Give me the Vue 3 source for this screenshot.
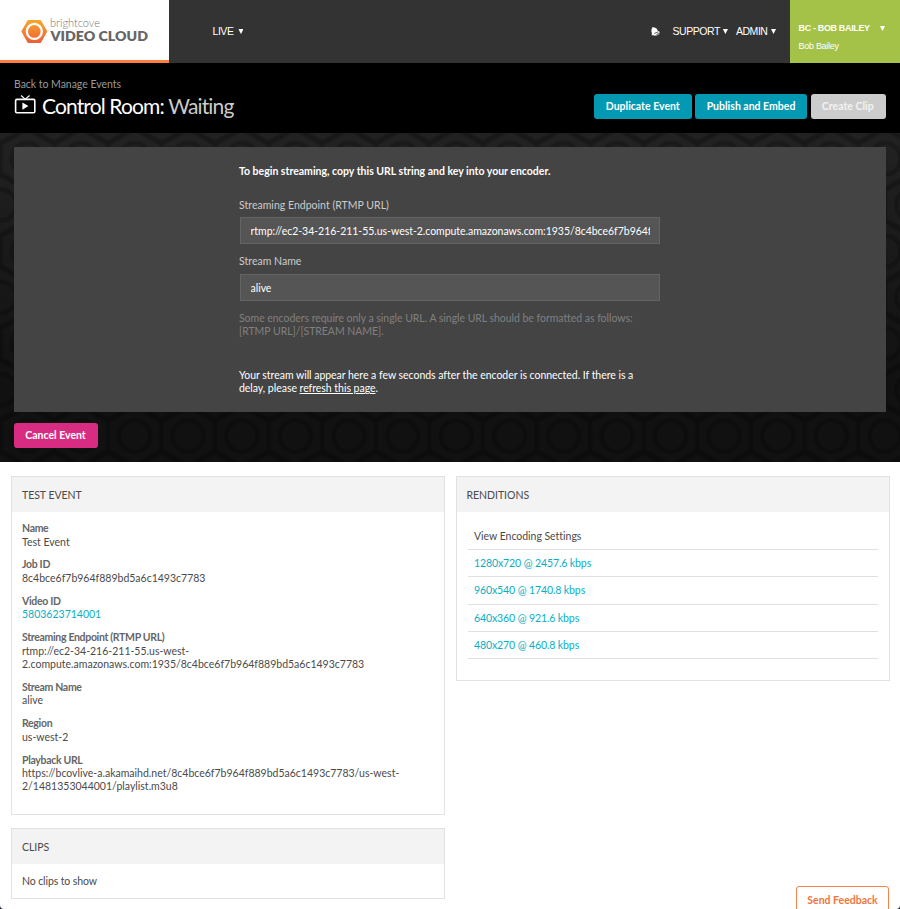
<script setup>
const actions = [
  { label: 'Duplicate Event', kind: 'primary dup' },
  { label: 'Publish and Embed', kind: 'primary pub' },
  { label: 'Create Clip', kind: 'disabled' },
]
const details = [
  { label: 'Name', lines: ['Test Event'] },
  { label: 'Job ID', lines: ['8c4bce6f7b964f889bd5a6c1493c7783'] },
  { label: 'Video ID', lines: ['5803623714001'], link: true },
  {
    label: 'Streaming Endpoint (RTMP URL)',
    lines: ['rtmp://ec2-34-216-211-55.us-west-', '2.compute.amazonaws.com:1935/8c4bce6f7b964f889bd5a6c1493c7783'],
  },
  { label: 'Stream Name', lines: ['alive'] },
  { label: 'Region', lines: ['us-west-2'] },
  {
    label: 'Playback URL',
    lines: ['https://bcovlive-a.akamaihd.net/8c4bce6f7b964f889bd5a6c1493c7783/us-west-', '2/1481353044001/playlist.m3u8'],
  },
]
const renditions = ['1280x720 @ 2457.6 kbps', '960x540 @ 1740.8 kbps', '640x360 @ 921.6 kbps', '480x270 @ 460.8 kbps']
</script>

<template>
  <div class="page">
    <header class="topbar">
      <div class="brand">
        <svg class="logo" width="128" height="28" viewBox="0 0 128 28">
          <defs>
            <linearGradient id="hex" x1="0" y1="0" x2="0" y2="1">
              <stop offset="0" stop-color="#f9a52b" />
              <stop offset="1" stop-color="#ee6039" />
            </linearGradient>
          </defs>
          <path d="M8.2 2.8H20.4L26.4 13.4L20.4 24.2H8.2L2.2 13.4Z" fill="url(#hex)" stroke="url(#hex)" stroke-width="1.6" stroke-linejoin="round" />
          <circle cx="14.3" cy="13.4" r="7.5" fill="none" stroke="#fff" stroke-width="2.3" />
          <text class="logo-small" x="30" y="9" textLength="50">brightcove</text>
          <text class="logo-big" x="30.5" y="22.8" textLength="97.5" lengthAdjust="spacingAndGlyphs">VIDEO CLOUD</text>
        </svg>
      </div>
      <nav class="nav">
        <span class="item live">LIVE <i class="caret"></i></span>
        <span class="spacer"></span>
        <svg class="bell" width="9" height="9" viewBox="0 0 9 9">
          <path d="M1 .4Q3.8-.4 5.8 1.7L6.6 3.5L8.4 5L4.6 8.3H.8V5.5L.3 4.3Z" fill="#fff" />
          <path d="M2.4 6.9L8.2 4.8Q8.7 7.4 6 8.1L3 8.3" fill="none" stroke="#ddd" stroke-width=".8" />
          <path d="M3.3 6.4L7 4.9" stroke="#333" stroke-width=".7" />
        </svg>
        <span class="item support">SUPPORT <i class="caret"></i></span>
        <span class="item">ADMIN <i class="caret"></i></span>
      </nav>
      <div class="account">
        <div class="account-name"><b>BC - BOB BAILEY</b><i class="caret"></i></div>
        <div class="user">Bob Bailey</div>
      </div>
    </header>

    <section class="heading">
      <div>
        <div class="back">Back to Manage Events</div>
        <h1>
          <svg width="22" height="20" viewBox="0 0 22 20">
            <rect x="1.6" y="4.4" width="19.2" height="13.4" rx="1.3" fill="none" stroke="#fff" stroke-width="1.6" />
            <path d="M7 .5L11.3 4.2L15.6 .5" fill="none" stroke="#fff" stroke-width="1.1" />
            <path d="M8.4 7.5L14.4 11.1L8.4 14.7Z" fill="#fff" />
          </svg>
          <span class="title">Control Room:</span><span class="status">Waiting</span>
        </h1>
      </div>
      <div class="actions">
        <button v-for="a in actions" :key="a.label" class="btn" :class="a.kind">{{ a.label }}</button>
      </div>
    </section>

    <section class="stage">
      <svg class="pattern" width="900" height="329">
        <defs>
          <linearGradient id="shade" x1="0" y1="0" x2="0" y2="1">
            <stop offset="0" stop-color="#222" />
            <stop offset=".75" stop-color="#111" />
            <stop offset="1" stop-color="#111" />
          </linearGradient>
          <pattern id="combs" width="53.6" height="92.4" patternUnits="userSpaceOnUse" patternTransform="translate(.6 -20.4)">
            <g fill="none" stroke="#000" stroke-opacity=".22">
              <g v-for="p in [[26.8, 46.2], [0, 0], [53.6, 0], [0, 92.4], [53.6, 92.4]]" :key="p.join()" :transform="`translate(${p[0]} ${p[1]})`">
                <path d="M0-29.2L26.2-14.4V14.4L0 29.2L-26.2 14.4V-14.4Z" stroke-width="3.4" />
                <circle r="15.6" stroke-width="4.6" />
              </g>
            </g>
          </pattern>
        </defs>
        <rect width="900" height="329" fill="url(#shade)" />
        <rect width="900" height="329" fill="url(#combs)" />
      </svg>
      <div class="player">
        <div class="form">
          <p class="lead">To begin streaming, copy this URL string and key into your encoder.</p>
          <label>Streaming Endpoint (RTMP URL)</label>
          <div class="field"><span>rtmp://ec2-34-216-211-55.us-west-2.compute.amazonaws.com:1935/8c4bce6f7b964f889bd5a6c1493c7783</span></div>
          <label>Stream Name</label>
          <div class="field second"><span>alive</span></div>
          <p class="hint">Some encoders require only a single URL. A single URL should be formatted as follows:<br />[RTMP URL]/[STREAM NAME].</p>
          <p class="note">Your stream will appear here a few seconds after the encoder is connected. If there is a<br />delay, please <u>refresh this page</u>.</p>
        </div>
      </div>
      <button class="btn cancel">Cancel Event</button>
    </section>

    <main class="content">
      <div class="column">
        <section class="card details">
          <h2>TEST EVENT</h2>
          <dl>
            <div v-for="d in details" :key="d.label" class="detail">
              <dt>{{ d.label }}</dt>
              <dd v-for="l in d.lines" :key="l" :class="{ link: d.link }">{{ l }}</dd>
            </div>
          </dl>
        </section>
        <section class="card clips">
          <h2>CLIPS</h2>
          <p>No clips to show</p>
        </section>
      </div>
      <section class="card renditions">
        <h2>RENDITIONS</h2>
        <ul>
          <li>View Encoding Settings</li>
          <li v-for="r in renditions" :key="r" class="link">{{ r }}</li>
        </ul>
      </section>
    </main>
    <button class="feedback">Send Feedback</button>
  </div>
</template>

<style>
html { background: #202631; }
</style>

<style scoped>
* { box-sizing: border-box; margin: 0; padding: 0; }
.page { position: relative; width: 900px; height: 909px; overflow: hidden; background: #fff; border-radius: 0 0 4px 4px; font: 10.5px/13px Lato, sans-serif; font-variant-ligatures: none; letter-spacing: -.03px; color: #4a4a4a; }
.topbar { display: flex; height: 63px; background: #333; color: #fff; font-family: "Liberation Sans", Arial, sans-serif; }
.brand { width: 169px; padding: 18px 0 0 20px; background: #fff; border-bottom: 3px solid #ff7f41; }
.logo { display: block; overflow: visible; }
.logo-small { font: 300 11px Lato, sans-serif; letter-spacing: 0; fill: #777; }
.logo-big { font: 800 13.5px Lato, sans-serif; letter-spacing: 0; fill: #666; }
.nav { flex: 1; display: flex; align-items: center; padding: 0 14px 0 43.5px; font-size: 10.5px; letter-spacing: -.45px; }
.item { display: flex; align-items: center; gap: 3.5px; white-space: nowrap; }
.live { gap: 5px; }
.support { margin: 0 8px 0 12px; gap: 3px; }
.spacer { flex: 1; }
.caret { width: 5px; height: 5px; background: #fff; clip-path: polygon(0 0, 100% 0, 50% 100%); }
.account { width: 110px; padding: 22px 15px 0 8.5px; background: #a4c248; font-size: 9px; letter-spacing: -.35px; }
.account-name { display: flex; align-items: center; justify-content: space-between; white-space: nowrap; }
.user { margin-top: 5px; letter-spacing: -.28px; }
.heading { display: flex; justify-content: space-between; height: 70px; padding: 0 14px; background: #000; }
.back { margin-top: 15px; color: #999; letter-spacing: -.03px; }
h1 { display: flex; height: 30px; align-items: center; font-size: 21px; line-height: 28px; font-weight: 400; letter-spacing: -.87px; white-space: nowrap; }
h1 svg { margin: -2px 6px 0 0; }
.title { color: #fff; margin-right: 4.5px; }
.status { color: #ccc; }
.actions { display: flex; gap: 3.5px; padding-top: 31px; }
.btn { height: 25px; padding: 0 1px 1px 0; border: 0; border-radius: 3px; color: #fff; font: 700 10.5px Lato, sans-serif; white-space: nowrap; }
.primary { background: #0499b3; }
.dup { width: 97.5px; padding-right: 0; }
.pub { width: 112px; padding-right: 0; }
.disabled { width: 75.5px; background: #ccc; color: #f2f2f2; }
.stage { position: relative; height: 329px; padding: 14px 14px 0; border-bottom: 1px solid #231f20; }
.pattern { position: absolute; inset: 0; }
.player { position: relative; height: 265px; margin-bottom: 11px; padding-left: 225px; background: #444; }
.form { width: 420.5px; padding-top: 18px; white-space: nowrap; color: #fff; }
.lead { font-weight: 700; margin-bottom: 21px; letter-spacing: 0; }
label { display: block; color: #ccc; margin-bottom: 5px; letter-spacing: .02px; }
.field { height: 27px; margin: 0 0 11px 1px; padding: 0 9px 0 9.5px; border: 1px solid #646464; background: #555; line-height: 26px; }
.second { margin-top: 6px; }
.field span { display: block; overflow: hidden; }
.hint { color: #808080; letter-spacing: -.04px; }
.note { margin-top: 31px; }
.cancel { position: relative; display: block; width: 84px; background: #d72c82; }
.content { display: flex; align-items: flex-start; gap: 11px; padding: 14px 10.5px 0; }
.column { display: flex; flex-direction: column; gap: 13px; width: 434.5px; }
.card { border: 1px solid #e2e2e2; }
h2 { height: 35px; padding-left: 10.5px; background: #f3f3f3; font-size: 10.5px; line-height: 36px; font-weight: 400; letter-spacing: -.03px; }
.details { height: 339px; }
dl { padding: 9px 10.5px; }
.detail { margin-bottom: 9.2px; }
dt { font-weight: 700; color: #666; line-height: 14.5px; letter-spacing: -.32px; }
dd { line-height: 12.8px; white-space: nowrap; letter-spacing: 0; }
.link { color: #08afc4; }
.clips { height: 71px; }
.clips p { padding: 11px 10.5px; letter-spacing: -.1px; }
.renditions { width: 433.5px; height: 205px; }
.renditions h2 { padding-left: 9.5px; }
ul { list-style: none; padding: 10.5px 10.5px 0; }
li { height: 27.4px; padding-left: 6.5px; line-height: 27.6px; border-bottom: 1px solid #e0e0e0; letter-spacing: -.1px; }
li:first-child { line-height: 27px; letter-spacing: -.03px; }
.feedback { position: absolute; left: 796px; top: 886px; width: 93px; height: 28px; border: 1px solid #f4824c; border-radius: 3px; background: #fff; color: #f1753b; font: 700 10.5px Lato, sans-serif; }
</style>
